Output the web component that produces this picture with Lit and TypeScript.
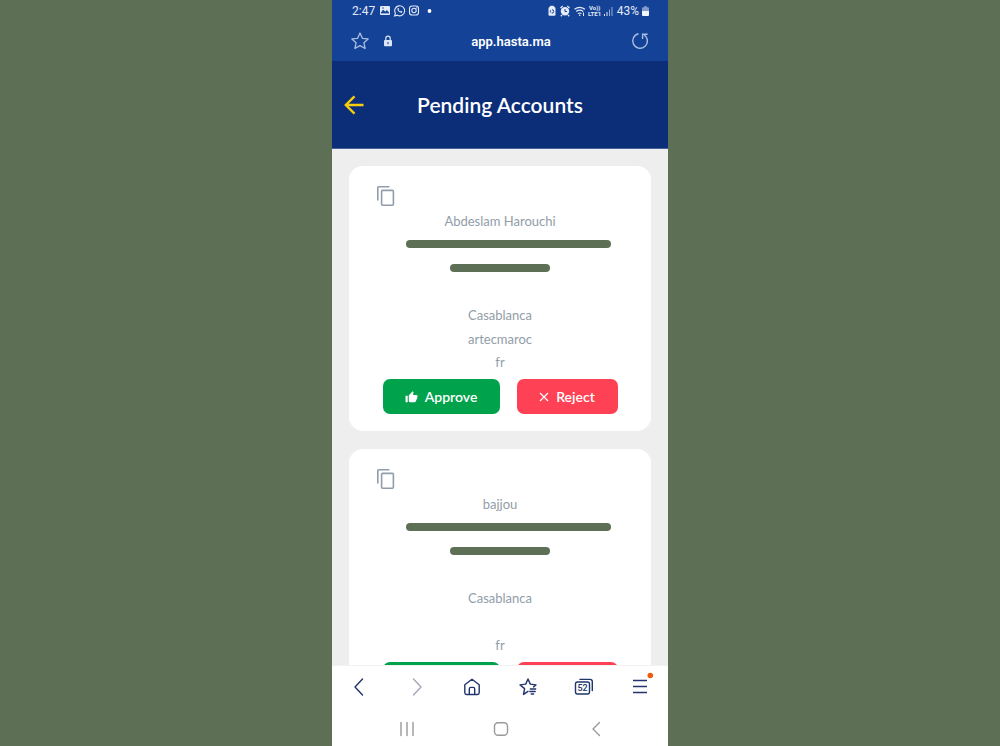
import { LitElement, html, css, svg } from "lit";
import { customElement, property } from "lit/decorators.js";

interface Account {
  name: string;
  city: string;
  company: string;
  language: string;
}

const accounts: Account[] = [
  { name: "Abdeslam Harouchi", city: "Casablanca", company: "artecmaroc", language: "fr" },
  { name: "bajjou", city: "Casablanca", company: "", language: "fr" },
];

@customElement("account-card")
export class AccountCard extends LitElement {
  @property({ attribute: false }) account!: Account;

  static styles = css`
    :host { display: block; background: #fff; border-radius: 14px; padding: 17px 24px; }
    button { font: inherit; border: 0; margin: 0; cursor: pointer; }
    .copy { display: block; width: 26px; height: 26px; padding: 0 3px; background: none; }
    .copy svg { display: block; }
    .rows { display: grid; grid-template-rows: repeat(7, 1fr); height: 165px; margin: 0; padding: 0; list-style: none; text-align: center; color: #929da8; font-size: 13px; }
    .rows li { display: flex; align-items: center; justify-content: center; }
    .hidden { height: 8px; border-radius: 4px; background: #5d6f55; }
    .email { width: 205px; margin-left: 17px; }
    .phone { width: 100px; }
    .actions { display: flex; justify-content: center; gap: 17px; margin-top: 5px; }
    .action { display: flex; align-items: center; justify-content: center; height: 35px; border-radius: 7px; color: #fff; font-size: 14px; font-weight: 600; gap: 7px; padding: 0; }
    .approve { width: 117px; background: #00a34c; }
    .reject { width: 101px; background: #ff4155; }
  `;

  render() {
    const a = this.account;
    return html`
      <button class="copy" aria-label="Copy account">
        <svg width="20" height="22" viewBox="0 0 20 22" fill="none" stroke="#929dac" stroke-width="1.6">
          <path d="M1.8 15.500V2.600Q1.800 1.800 2.600 1.800H13.400"/>
          <rect x="5.600" y="5.400" width="11.800" height="14.800" rx="1"/>
        </svg>
      </button>
      <ul class="rows">
        <li>${a.name}</li>
        <li><span class="hidden email" role="img" aria-label="Email hidden"></span></li>
        <li><span class="hidden phone" role="img" aria-label="Phone hidden"></span></li>
        <li></li>
        <li>${a.city}</li>
        <li>${a.company}</li>
        <li>${a.language}</li>
      </ul>
      <div class="actions">
        <button class="action approve">
          <svg width="13" height="12" viewBox="0 0 24 22" fill="#fff"><path d="M1 20.500h4v-12H1v12zM23 9.500a2 2 0 0 0-2-2h-6.300l1-4.600v-.3c0-.4-.2-.8-.4-1.100L14.200.5 7.600 7.100C7.200 7.400 7 7.900 7 8.500v10a2 2 0 0 0 2 2h9c.8 0 1.500-.5 1.800-1.200l3-7.100c.1-.2.2-.5.2-.7v-2z"/></svg>
          Approve
        </button>
        <button class="action reject">
          <svg width="10" height="10" viewBox="0 0 10 10" stroke="#fff" stroke-width="1.200"><path d="M1 1l8 8M9 1l-8 8"/></svg>
          Reject
        </button>
      </div>
    `;
  }
}

@customElement("app-root")
export class AppRoot extends LitElement {
  static styles = css`
    :host { display: flex; justify-content: center; height: 100vh; overflow: hidden; background: #5d6f55; font-family: Lato, "Liberation Sans", sans-serif; }
    * { box-sizing: border-box; }
    button { border: 0; margin: 0; padding: 0; background: none; font: inherit; color: inherit; cursor: pointer; display: flex; align-items: center; justify-content: center; }
    svg { display: block; flex: none; }
    .phone { display: flex; flex-direction: column; width: 100%; max-width: 336px; background: #fff; }
    .browser { background: #144296; color: #e3eaf8; font-family: Roboto, sans-serif; }
    .status { display: flex; align-items: center; justify-content: space-between; height: 21px; padding: 0 19px 0 20px; font-size: 12px; }
    .group { display: flex; align-items: center; gap: 3px; }
    .url { display: grid; grid-template-columns: 1fr auto 1fr; align-items: center; height: 40px; padding: 0 18px; }
    .tools { display: flex; align-items: center; gap: 13px; }
    .address { color: #fff; font-size: 13px; font-weight: 600; padding-left: 22px; }
    .reload { justify-self: end; }
    .header { display: grid; grid-template-columns: 24px 1fr 24px; align-items: center; height: 88px; flex: none; padding: 0 10px; background: #0c2e79; border-bottom: 1px solid #47619a; }
    h1 { margin: 0; color: #fff; font-size: 21px; font-weight: 600; text-align: center; }
    .list { flex: 1; min-height: 0; overflow: hidden; display: flex; flex-direction: column; gap: 18px; padding: 17px; background: #eee; }
    .list account-card { flex: none; }
    .nav { display: grid; grid-template-columns: repeat(6, 1fr); height: 43px; flex: none; border-top: 1px solid #f2f2f2; }
    .system { display: grid; grid-template-columns: repeat(3, 1fr); height: 38px; flex: none; padding: 4px 25px 0 28px; }
  `;

  private renderStatus() {
    return html`
      <div class="status">
        <div class="group">
          <span>2:47</span>
          <svg width="58" height="14" viewBox="0 0 58 14" fill="none" stroke="#e3eaf8">
            <path d="M3 2h8q1 0 1 1v7q0 1-1 1H3q-1 0-1-1V3q0-1 1-1z" fill="#e3eaf8" stroke="none"/>
            <path d="M3 9l2.200-3 2 2L9 6.500 11 9zM4 4h2" stroke="#144296" fill="#144296" stroke-width=".8"/>
            <path d="M16.600 12l.8-2.600a5 5 0 1 1 1.900 1.800z" stroke-width="1.100"/>
            <path d="M19.600 4.300c-.8 1.900 1.900 4.800 4.200 4.400l.6-1.200-1.500-.8-.7.7c-.8-.3-1.300-.9-1.600-1.600l.6-.6-.6-1.300z" fill="#e3eaf8" stroke="none"/>
            <rect x="31.500" y="2" width="9" height="9" rx="2.600" stroke-width="1.100"/><circle cx="36" cy="6.500" r="2.200" stroke-width="1.100"/><circle cx="38.700" cy="3.900" r=".6" fill="#e3eaf8" stroke="none"/>
            <circle cx="51.500" cy="7" r="1.900" fill="#fff" stroke="none"/>
          </svg>
        </div>
        <div class="group">
          <svg width="38" height="14" viewBox="0 0 38 14" fill="#e3eaf8">
            <path d="M2.500 3L3.500 1.800h3L7.500 3q1 .2 1 1.200v6.600q0 1-1 1h-5q-1 0-1-1V4.200q0-1 1-1.200z"/>
            <circle cx="5" cy="7.400" r="1.700" fill="none" stroke="#144296" stroke-dasharray="2.600 1"/>
            <circle cx="18" cy="7.300" r="4.200"/><path d="M13.500 4l2.200-2M20.300 2l2.200 2M15 11l-1.200 1.300M21 11l1.200 1.300" stroke="#e3eaf8" stroke-width="1.300"/>
            <path d="M18 5v2.500h2" fill="none" stroke="#144296"/>
            <path d="M27.500 5.300q5.200-4 10.400 0M29.200 7.500q3.500-2.700 7 0M31 9.700q1.700-1.400 3.400 0" fill="none" stroke="#e3eaf8" stroke-width="1.200"/><circle cx="32.700" cy="11.200" r=".8"/>
            <path d="M36.500 8.500v3.500" stroke="#e3eaf8"/>
          </svg>
          <svg width="26" height="14" viewBox="0 0 26 14" fill="#e3eaf8">
            <text x="1" y="6" font-size="6" font-weight="700" font-family="Roboto, sans-serif">Vo))</text>
            <text x="0" y="12" font-size="6" font-weight="700" font-family="Roboto, sans-serif">LTE1</text>
            <path d="M16 10h1v2h-1zM18.500 8h1v4h-1z"/><path d="M21 5.500h1V12h-1zM23.500 3h1v9h-1z" opacity=".65"/>
          </svg>
          <span>43%</span>
          <svg width="7" height="10" viewBox="0 0 7 10"><path d="M2.300 0h2.400v1.300H6q1 0 1 1V5H0V2.300q0-1 1-1h1.300z" fill="#829bc9"/><path d="M0 5h7v4q0 1-1 1H1Q0 10 0 9z" fill="#f2f5fc"/></svg>
        </div>
      </div>`;
  }

  private navIcon(shape: unknown, color = "#20356b") {
    return html`<svg width="24" height="24" viewBox="0 0 24 24" fill="none" stroke=${color} stroke-width="1.400" stroke-linejoin="round" stroke-linecap="round">${shape}</svg>`;
  }

  render() {
    return html`
      <div class="phone">
        <div class="browser">
          ${this.renderStatus()}
          <div class="url">
            <div class="tools">
              <button aria-label="Bookmark page"><svg width="20" height="20" viewBox="0 0 20 20" fill="none" stroke="#a9bde0" stroke-width="1.300" stroke-linejoin="round"><path d="M10 2l2.400 5.300 5.700.6-4.200 3.900 1.200 5.700L10 14.600l-5.100 2.900 1.200-5.700-4.200-3.900 5.700-.6z"/></svg></button>
              <svg width="10" height="12" viewBox="0 0 10 12"><path d="M2.800 5.500V3.300a2.200 2.200 0 0 1 4.400 0v2.200" fill="none" stroke="#dce5f5" stroke-width="1.200"/><rect x="1" y="5" width="8" height="6.200" rx=".9" fill="#dce5f5"/><path d="M5 7v2.200" stroke="#144296"/></svg>
            </div>
            <span class="address">app.hasta.ma</span>
            <button class="reload" aria-label="Reload"><svg width="20" height="20" viewBox="0 0 20 20" fill="none" stroke="#a9bde0" stroke-width="1.400"><path d="M8.500 2.800a7.300 7.300 0 1 0 5.800 1.200M12.600 8V3.200h5"/></svg></button>
          </div>
        </div>
        <header class="header">
          <button aria-label="Back"><svg width="22" height="22" viewBox="0 0 22 22" fill="none" stroke="#f5cd0c" stroke-width="2.400"><path d="M20.500 11H3M11.500 2.300L2.800 11l8.700 8.700"/></svg></button>
          <h1>Pending Accounts</h1>
        </header>
        <main class="list">${accounts.map((a) => html`<account-card .account=${a}></account-card>`)}</main>
        <nav class="nav" aria-label="Browser">
          <button aria-label="Previous page">${this.navIcon(svg`<path d="M14.500 4L7 12l7.500 8"/>`)}</button>
          <button aria-label="Next page">${this.navIcon(svg`<path d="M9.500 4l7.500 8-7.500 8"/>`, "#a4a8bc")}</button>
          <button aria-label="Home">${this.navIcon(svg`<path d="M4.800 9.800L12 4.300l7.200 5.500v8q0 1.700-1.700 1.700h-11q-1.700 0-1.700-1.700zM9.300 19.300V14q0-1.600 1.600-1.600h2.200q1.600 0 1.600 1.600v5.300"/>`)}</button>
          <button aria-label="Bookmarks">${this.navIcon(svg`<path d="M12 16.300l-4.500 3.100 1.100-5.800L4 9.900l5.700-.8L12 4l2.300 5.100 5.700.8-2.400 2M14.300 14h5.400M13.800 16.500h5.400M15.200 19h2.400"/>`)}</button>
          <button aria-label="52 open tabs">${this.navIcon(svg`<rect x="3.500" y="7" width="14" height="12" rx="2"/><path d="M8 4.400h10q2.300 0 2.300 2.300v8.800"/><text x="10.500" y="16.200" text-anchor="middle" font-family="Roboto, sans-serif" font-size="9" font-weight="500" fill="#20356b" stroke="none">52</text>`)}</button>
          <button aria-label="Menu"><svg width="28" height="32" viewBox="0 0 28 32" fill="none" stroke="#20356b" stroke-width="1.400"><path d="M7 9.500h14M7 15.500h14M7 21.500h14"/><circle cx="24.300" cy="4.500" r="2.800" fill="#ef5b0c" stroke="none"/></svg></button>
        </nav>
        <nav class="system" aria-label="System">
          <button aria-label="Recent apps">${this.navIcon(svg`<path d="M6 5.500v13M12 5.500v13M18 5.500v13"/>`, "#999")}</button>
          <button aria-label="Home screen">${this.navIcon(svg`<rect x="5.500" y="5.700" width="13" height="12.600" rx="3.500"/>`, "#999")}</button>
          <button aria-label="System back">${this.navIcon(svg`<path d="M15.500 5.500L9 12l6.500 6.500"/>`, "#999")}</button>
        </nav>
      </div>
    `;
  }
}
